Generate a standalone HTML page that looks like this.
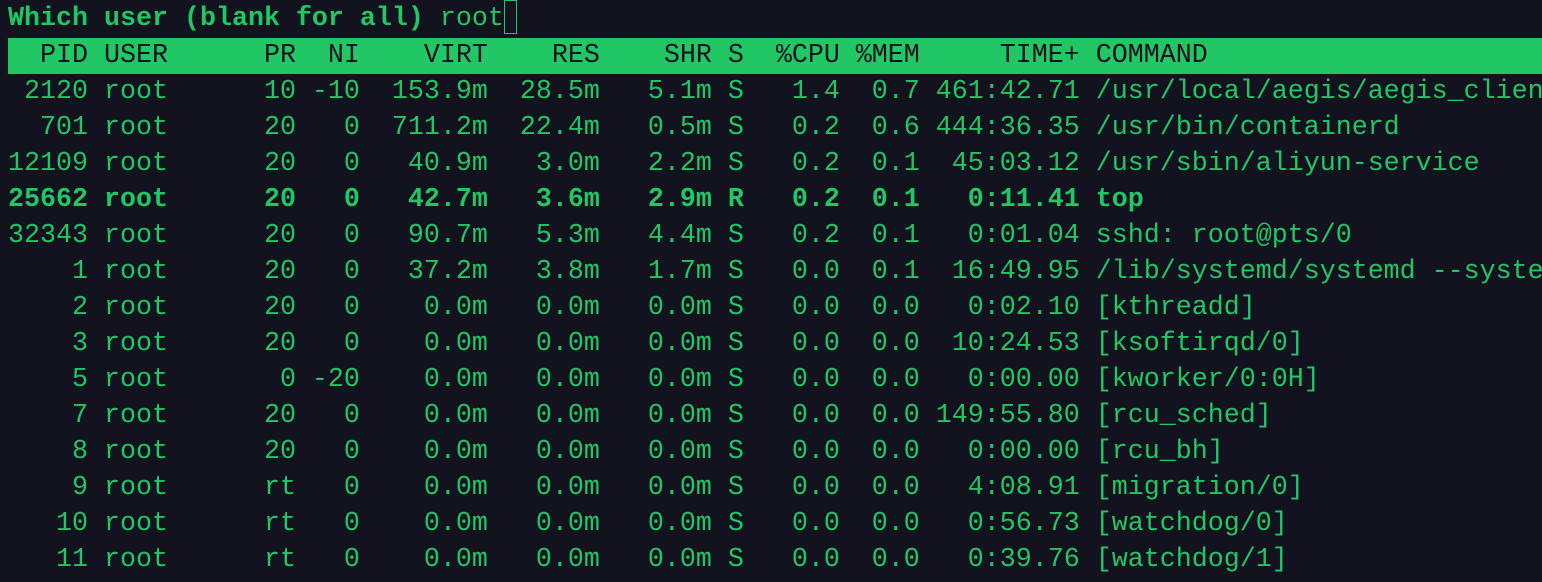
<!DOCTYPE html>
<html><head><meta charset="utf-8"><style>
html,body{margin:0;padding:0;background:#12131e;width:1542px;height:582px;overflow:hidden}
pre{margin:0;padding:0 0 0 8px;font-family:"Liberation Mono",monospace;font-size:26.67px;line-height:36px;color:#20c764;white-space:pre}
.h{background:#20c764;color:#12131e;display:block;margin-top:1px;width:1534px}
b{font-weight:bold}
.cur{display:inline-block;width:13px;height:34px;border:1.5px solid #20c764;box-sizing:border-box;vertical-align:-9px}
</style></head><body><pre><b>Which user (blank for all)</b> root<span class="cur"></span>
<span class="h">  PID USER      PR  NI    VIRT    RES    SHR S  %CPU %MEM     TIME+ COMMAND</span> 2120 root      10 -10  153.9m  28.5m   5.1m S   1.4  0.7 461:42.71 /usr/local/aegis/aegis_client
  701 root      20   0  711.2m  22.4m   0.5m S   0.2  0.6 444:36.35 /usr/bin/containerd
12109 root      20   0   40.9m   3.0m   2.2m S   0.2  0.1  45:03.12 /usr/sbin/aliyun-service
<b>25662 root      20   0   42.7m   3.6m   2.9m R   0.2  0.1   0:11.41 top</b>
32343 root      20   0   90.7m   5.3m   4.4m S   0.2  0.1   0:01.04 sshd: root@pts/0
    1 root      20   0   37.2m   3.8m   1.7m S   0.0  0.1  16:49.95 /lib/systemd/systemd --system
    2 root      20   0    0.0m   0.0m   0.0m S   0.0  0.0   0:02.10 [kthreadd]
    3 root      20   0    0.0m   0.0m   0.0m S   0.0  0.0  10:24.53 [ksoftirqd/0]
    5 root       0 -20    0.0m   0.0m   0.0m S   0.0  0.0   0:00.00 [kworker/0:0H]
    7 root      20   0    0.0m   0.0m   0.0m S   0.0  0.0 149:55.80 [rcu_sched]
    8 root      20   0    0.0m   0.0m   0.0m S   0.0  0.0   0:00.00 [rcu_bh]
    9 root      rt   0    0.0m   0.0m   0.0m S   0.0  0.0   4:08.91 [migration/0]
   10 root      rt   0    0.0m   0.0m   0.0m S   0.0  0.0   0:56.73 [watchdog/0]
   11 root      rt   0    0.0m   0.0m   0.0m S   0.0  0.0   0:39.76 [watchdog/1]
</pre></body></html>
